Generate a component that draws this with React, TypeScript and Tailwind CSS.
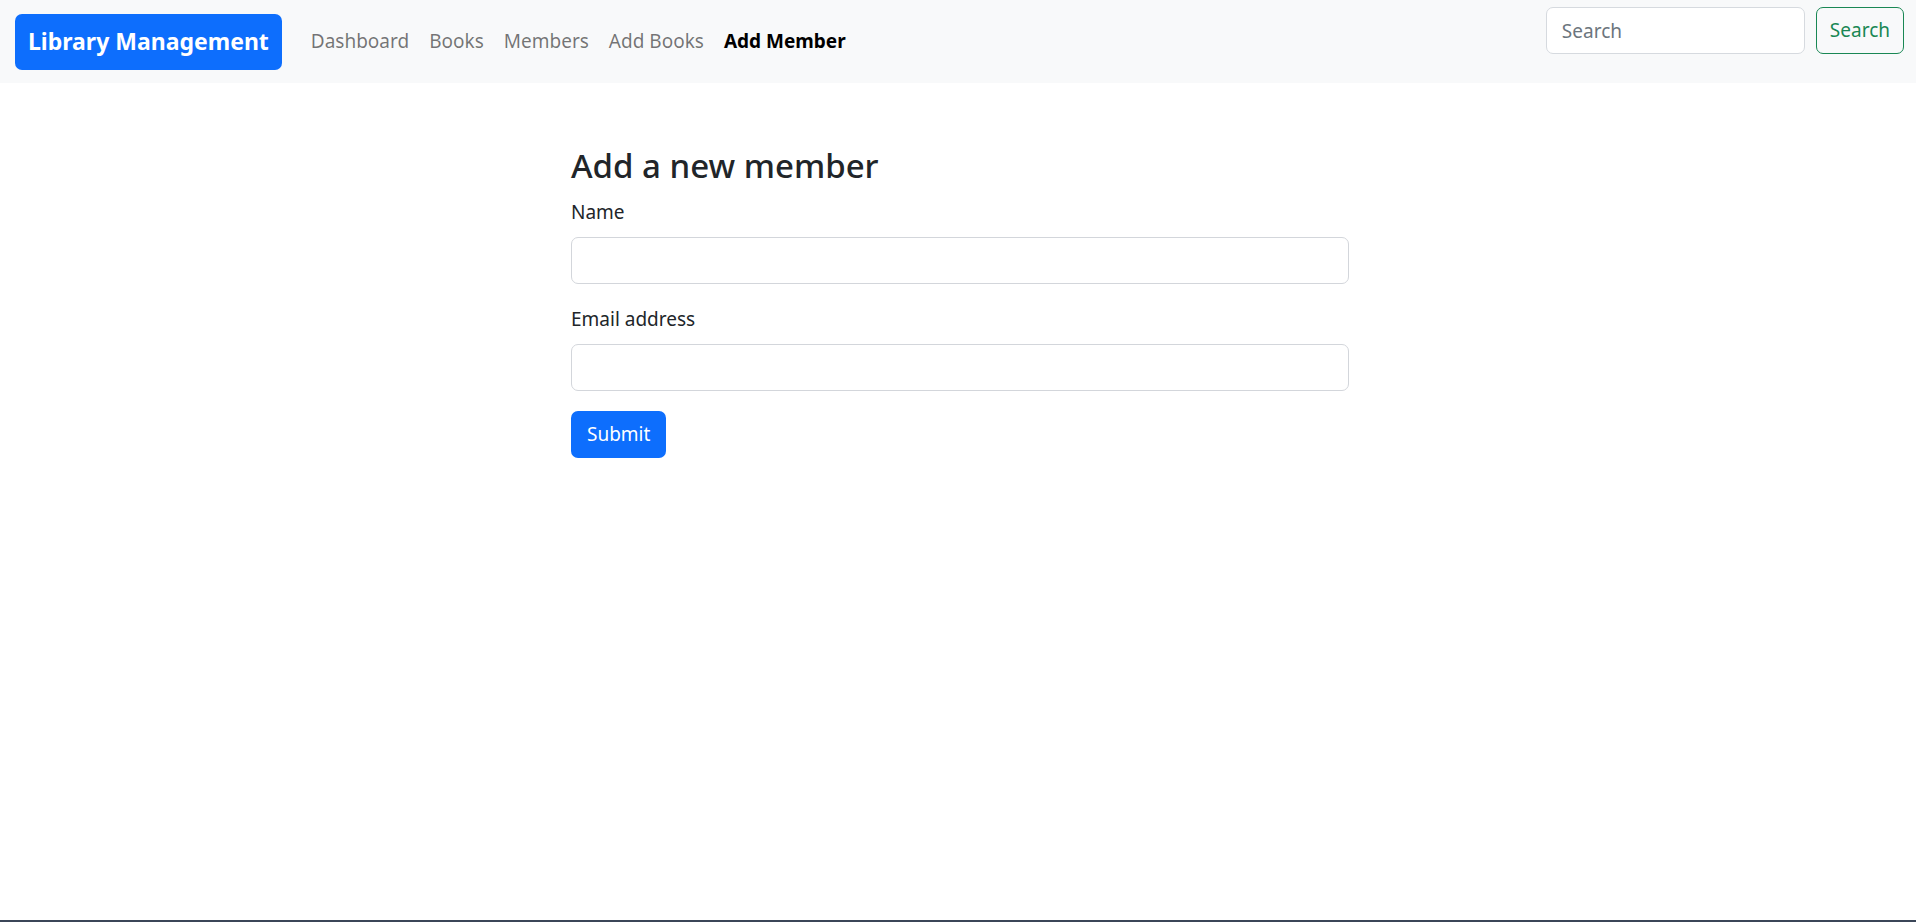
import { useState } from 'react'

const links = ['Dashboard', 'Books', 'Members', 'Add Books']

export default function App() {
  const [name, setName] = useState('')
  const [email, setEmail] = useState('')
  const [query, setQuery] = useState('')

  return (
    <div className="min-h-[922px] flex flex-col bg-white text-[#212529] font-['Noto_Sans',sans-serif]">
      <nav className="h-[83px] bg-[#f8f9fa] flex items-center pl-[15px] pr-[12px]">
        <a className="h-[56px] px-[13px] flex items-center rounded-[7px] bg-[#0d6efd] text-white text-[23px] font-bold">
          Library Management
        </a>
        <ul className="flex items-center ml-[19px] text-[19px]">
          {links.map((l) => (
            <li key={l}>
              <a className="px-[10px] text-[rgba(0,0,0,0.55)]">{l}</a>
            </li>
          ))}
          <li>
            <a className="px-[10px] text-black font-bold">Add Member</a>
          </li>
        </ul>
        <form className="ml-auto flex items-center gap-[11px] self-start mt-[7px]" onSubmit={(e) => e.preventDefault()}>
          <input
            value={query}
            onChange={(e) => setQuery(e.target.value)}
            placeholder="Search"
            className="w-[259px] h-[47px] px-[15px] bg-white border border-[#d6dadf] rounded-[7px] text-[19px] placeholder-[#6c757d] focus:outline-none"
          />
          <button className="h-[47px] px-[13px] border border-[#198754] text-[#198754] rounded-[7px] text-[19px]">
            Search
          </button>
        </form>
      </nav>

      <main className="flex-1 pt-[62px] pl-[4px]">
        <div className="w-[778px] mx-auto">
          <h3 className="text-[33px] font-medium leading-[42px] mb-[10px]">Add a new member</h3>
          <label className="block text-[19px] leading-[30px] mb-[10px]">Name</label>
          <input
            value={name}
            onChange={(e) => setName(e.target.value)}
            className="block w-full h-[47px] px-[15px] border border-[#d3d6db] rounded-[7px] mb-[20px] focus:outline-none"
          />
          <label className="block text-[19px] leading-[30px] mb-[10px]">Email address</label>
          <input
            type="email"
            value={email}
            onChange={(e) => setEmail(e.target.value)}
            className="block w-full h-[47px] px-[15px] border border-[#d3d6db] rounded-[7px] mb-[20px] focus:outline-none"
          />
          <button className="h-[47px] px-[16px] bg-[#0d6efd] text-white rounded-[7px] text-[19px]">Submit</button>
        </div>
      </main>
      <div className="h-[2px] bg-[#3b4658]" />
    </div>
  )
}
